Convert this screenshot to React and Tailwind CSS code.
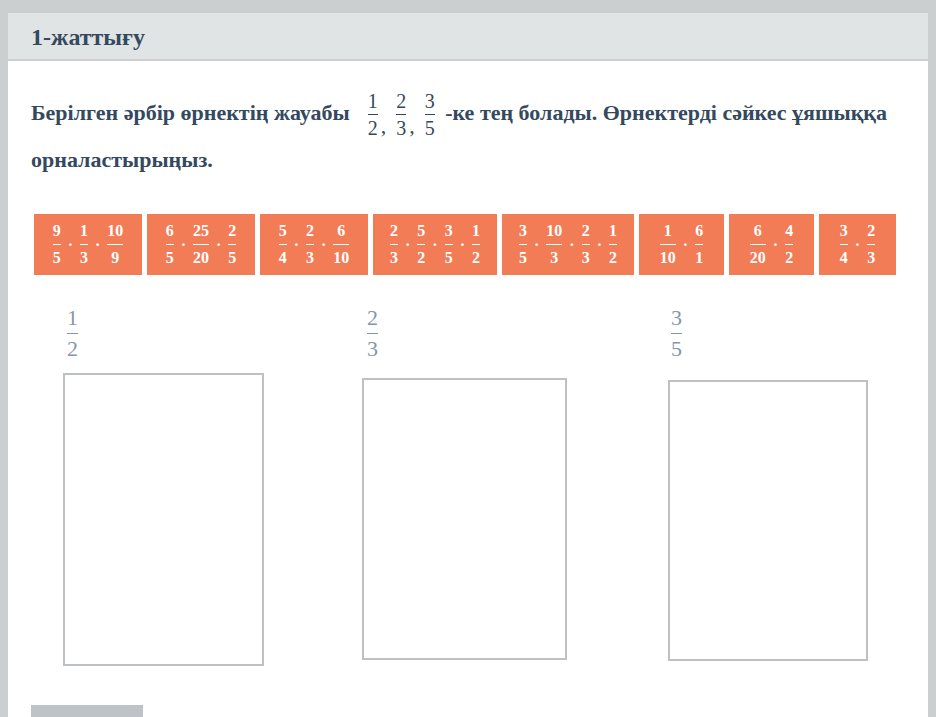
import React from 'react';

// serif stack with a Cyrillic-extended fallback for the Kazakh letters
const SERIF = "font-['Liberation_Serif','DejaVu_Serif',serif]";

const Frac = ({ n, d, size = 'text-[20px]', bar = 'bg-[#34495e]', gap = 'my-[3px]', w = 'px-[2px]' }) => (
  <span className={`inline-flex flex-col items-center align-middle leading-none ${SERIF} ${size} ${w}`}>
    <span className={SERIF}>{n}</span>
    <span className={`block h-px self-stretch ${bar} ${gap}`} />
    <span className={SERIF}>{d}</span>
  </span>
);

const Dot = () => <span className={`mx-[5px] text-[16px] leading-none font-bold ${SERIF}`}>·</span>;

const Comma = () => <span className={`leading-none text-[22px] mb-[1px] ml-[1px] mr-[8px] ${SERIF}`}>,</span>;

const tiles = [
  { w: 'w-[108px]', parts: [['9', '5'], ['1', '3'], ['10', '9']] },
  { w: 'w-[108px]', parts: [['6', '5'], ['25', '20'], ['2', '5']] },
  { w: 'w-[108px]', parts: [['5', '4'], ['2', '3'], ['6', '10']] },
  { w: 'w-[124px]', parts: [['2', '3'], ['5', '2'], ['3', '5'], ['1', '2']] },
  { w: 'w-[132px]', parts: [['3', '5'], ['10', '3'], ['2', '3'], ['1', '2']] },
  { w: 'w-[85px]', parts: [['1', '10'], ['6', '1']] },
  { w: 'w-[85px]', parts: [['6', '20'], ['4', '2']] },
  { w: 'w-[77px]', parts: [['3', '4'], ['2', '3']] },
];

const zones = [
  { n: '1', d: '2', box: 'w-[201px] h-[293px] mt-[13px]' },
  { n: '2', d: '3', box: 'w-[205px] h-[282px] mt-[18px]' },
  { n: '3', d: '5', box: 'w-[200px] h-[281px] mt-[20px]' },
];

const Tile = ({ w, parts }) => (
  <div className={`${w} h-[61px] bg-[#f27c55] text-white font-bold flex items-center justify-center`}>
    {parts.map(([n, d], i) => (
      <React.Fragment key={i}>
        {i > 0 && <Dot />}
        <Frac n={n} d={d} size="text-[16px]" bar="bg-white" gap="my-[5px]" w="px-[2px]" />
      </React.Fragment>
    ))}
  </div>
);

export default function App() {
  return (
    <div className={`min-h-[717px] bg-[#cbcfd0] pt-[13px] px-[8px] overflow-hidden ${SERIF}`}>
      <div className="bg-white h-[704px]">
        <div className="h-[48px] bg-[#e0e4e5] border-b-2 border-[#cbcfd0] flex items-center px-[23px]">
          <h1 className={`text-[24px] font-bold text-[#34495e] leading-none pt-[1px] ${SERIF}`}>1-жаттығу</h1>
        </div>

        <div className="px-[23px] pt-[28px] text-[#34495e] font-bold text-[22px] leading-[47px]">
          <p className={SERIF}>
            Берілген әрбір өрнектің жауабы
            <span className={`inline-flex items-end align-middle -my-[6px] ml-[16px] mr-[3px] font-normal ${SERIF}`}>
              <Frac n="1" d="2" />
              <Comma />
              <Frac n="2" d="3" />
              <Comma />
              <Frac n="3" d="5" />
            </span>{' '}
            -ке тең болады. Өрнектерді сәйкес ұяшыққа орналастырыңыз.
          </p>
        </div>

        <div className="flex gap-[5px] pl-[26px] mt-[31px]">
          {tiles.map((t, i) => (
            <Tile key={i} {...t} />
          ))}
        </div>

        <div className="grid grid-cols-[299px_306px_auto] pl-[55px] mt-[32px]">
          {zones.map((z, i) => (
            <div key={i} className="flex flex-col">
              <div className={`text-[#8796a5] pl-[2px] ${i === 0 ? 'ml-[1px]' : i === 1 ? 'ml-[2px]' : 'ml-[0px]'}`}>
                <Frac n={z.n} d={z.d} size="text-[22px]" bar="bg-[#8796a5]" gap="my-[4px]" w="px-[1px]" />
              </div>
              <div className={`${z.box} border-2 border-[#bdc1c4]`} />
            </div>
          ))}
        </div>

        <div className="pl-[23px] mt-[39px]">
          <div className="w-[112px] h-[20px] bg-[#bdc3c7]" />
        </div>
      </div>
    </div>
  );
}
